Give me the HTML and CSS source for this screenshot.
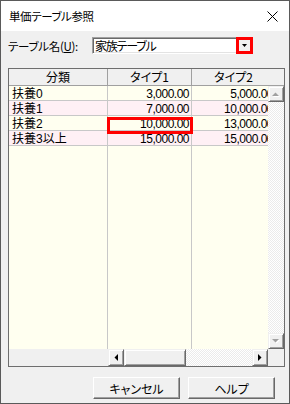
FILE: index.html
```html
<!DOCTYPE html>
<html lang="ja">
<head>
  <meta charset="UTF-8" />
  <title>単価テーブル参照</title>
  <link rel="stylesheet" href="styles.css">
</head>
<body>
  <div class="window">
    <div class="titlebar">
      <span class="title">単価テーブル参照</span>
      <svg class="close" width="11" height="11" viewBox="0 0 11 11">
        <path d="M0.5 0.5 L10.5 10.5 M10.5 0.5 L0.5 10.5" stroke="#000" stroke-width="1" fill="none" />
      </svg>
    </div>

    <div class="content">
      <div class="field-row">
        <label class="field-label">テーブル名(<u>U</u>):</label>
        <div class="combo">
          <span class="combo-text">家族テーブル</span>
          <span class="combo-btn">
            <svg width="5" height="3" viewBox="0 0 5 3"><polygon points="0,0 5,0 2.5,3" fill="#000" /></svg>
          </span>
          <span class="mark mark-btn"></span>
        </div>
      </div>

      <div class="grid">
        <div class="viewport">
          <table class="sheet">
            <colgroup>
              <col class="w1"><col class="w2"><col class="w2">
            </colgroup>
            <thead>
              <tr><th>分類</th><th>タイプ1</th><th>タイプ2</th></tr>
            </thead>
            <tbody>
              <tr class="odd"><td class="name">扶養0</td><td class="num">3,000.00</td><td class="num">5,000.00</td></tr>
              <tr class="even"><td class="name">扶養1</td><td class="num">7,000.00</td><td class="num">10,000.00</td></tr>
              <tr class="odd"><td class="name">扶養2</td><td class="num">10,000.00</td><td class="num">13,000.00</td></tr>
              <tr class="even"><td class="name">扶養3以上</td><td class="num">15,000.00</td><td class="num">15,000.00</td></tr>
              <tr class="filler"><td></td><td></td><td></td></tr>
            </tbody>
          </table>
        </div>

        <div class="head-corner"></div>

        <div class="vscroll">
          <div class="sbtn">
            <svg width="8" height="5" viewBox="0 0 8 5"><polygon points="1,5 8,5 4.5,1.5" fill="#fff" /><polygon points="0,4 7,4 3.5,0.5" fill="#a0a0a0" /></svg>
          </div>
          <div class="track"></div>
          <div class="sbtn">
            <svg width="8" height="5" viewBox="0 0 8 5"><polygon points="1,1 8,1 4.5,4.5" fill="#fff" /><polygon points="0,0 7,0 3.5,3.5" fill="#a0a0a0" /></svg>
          </div>
        </div>

        <div class="frozen"></div>

        <div class="hscroll">
          <div class="sbtn">
            <svg width="4" height="7" viewBox="0 0 4 7"><polygon points="4,0 4,7 0.5,3.5" fill="#000" /></svg>
          </div>
          <div class="thumb"></div>
          <div class="track"></div>
          <div class="sbtn">
            <svg width="4" height="7" viewBox="0 0 4 7"><polygon points="0,0 0,7 3.5,3.5" fill="#000" /></svg>
          </div>
        </div>

        <div class="foot-corner"></div>

        <span class="mark mark-cell"></span>
      </div>

      <div class="buttons">
        <button class="btn">キャンセル</button>
        <button class="btn">ヘルプ</button>
      </div>
    </div>
  </div>
</body>
</html>
```

FILE: styles.css
```css
body {
  margin: 0;
  background: #fff;
  font-family: "Noto Sans CJK JP", sans-serif;
  font-size: 12px;
  color: #000;
}

.window {
  width: 290px;
  height: 404px;
  box-sizing: border-box;
  border: 1px solid #5a5a5a;
  background: #f0f0f0;
  display: flex;
  flex-direction: column;
}

.titlebar {
  height: 30px;
  flex: none;
  background: #fff;
  display: flex;
  align-items: center;
  justify-content: space-between;
  padding: 0 11px 0 8px;
}

.title {
  font-size: 11.5px;
  font-feature-settings: "palt";
  letter-spacing: -0.4px;
  line-height: 14px;
}

.content {
  padding: 6px 4px 0 7px;
}

.field-row {
  display: flex;
  align-items: center;
  height: 17px;
}

.field-label {
  width: 84px;
  font-size: 11.5px;
  font-feature-settings: "palt";
  letter-spacing: -0.3px;
  line-height: 14px;
}

.combo {
  position: relative;
  width: 161px;
  height: 17px;
  box-sizing: border-box;
  background: #fff;
  border: 1px solid;
  border-color: #a0a0a0 #fff #fff #a0a0a0;
  box-shadow: inset 1px 1px #696969, inset -1px -1px #e3e3e3;
  display: flex;
  align-items: center;
  padding: 0 1px 0 2px;
}

.combo-text {
  font-feature-settings: "palt";
  letter-spacing: -1.2px;
  line-height: 14px;
}

.combo-btn {
  margin-left: auto;
  width: 14px;
  height: 13px;
  background: #f0f0f0;
  display: flex;
  align-items: center;
  justify-content: center;
}

.mark {
  position: absolute;
  box-sizing: border-box;
  border: 3px solid #f00;
}

.mark-btn {
  top: -1px;
  right: -1px;
  width: 17px;
  height: 17px;
}

.grid {
  position: relative;
  margin-top: 14px;
  width: 277px;
  height: 299px;
  box-sizing: border-box;
  border: 1px solid #6e6e6e;
  background: #f0f0f0;
  display: grid;
  grid-template-columns: 99px 84px 76px 16px;
  grid-template-rows: 17px 1fr 17px;
}

.viewport {
  grid-column: 1 / 4;
  grid-row: 1 / 3;
  overflow: hidden;
}

.sheet {
  table-layout: fixed;
  width: 267px;
  height: 100%;
  border-collapse: separate;
  border-spacing: 0;
  font-family: "Liberation Sans", "Noto Sans CJK JP", sans-serif;
}

.w1 { width: 99px; }
.w2 { width: 84px; }

.sheet th {
  height: 16px;
  padding: 0;
  font-family: "Noto Sans CJK JP", sans-serif;
  font-weight: normal;
  line-height: 16px;
  background: #f0f0f0;
  border-right: 1px solid #a0a0a0;
  border-bottom: 1px solid #a0a0a0;
  text-align: center;
  font-feature-settings: "palt";
}

.sheet td {
  height: 11px;
  padding: 3px 0 0;
  line-height: 11px;
  border-right: 1px solid #c8c8c8;
  border-bottom: 1px solid #c8c8c8;
  white-space: nowrap;
}

.sheet .name {
  padding-left: 3px;
}

.sheet .num {
  text-align: right;
  padding-right: 2px;
  letter-spacing: -0.5px;
}

.odd td { background: #fffff0; }
.even td { background: #fff0f5; }

.sheet .filler td {
  height: auto;
  background: #fffff0;
  border-bottom: none;
}

.head-corner {
  grid-column: 4;
  grid-row: 1;
  background: #f0f0f0;
  border-bottom: 1px solid #a0a0a0;
}

.vscroll {
  grid-column: 4;
  grid-row: 2;
  display: flex;
  flex-direction: column;
}

.sbtn,
.thumb {
  box-sizing: border-box;
  background: #f0f0f0;
  border: 1px solid;
  border-color: #f0f0f0 #696969 #696969 #f0f0f0;
  box-shadow: inset 1px 1px #fff, inset -1px -1px #a0a0a0;
  display: flex;
  align-items: center;
  justify-content: center;
}

.vscroll .sbtn {
  height: 16px;
}

.track {
  flex: 1;
  background-color: #fff;
  background-image: conic-gradient(#fff 25%, #ebebeb 0 50%, #fff 0 75%, #ebebeb 0);
  background-size: 2px 2px;
}

.frozen {
  grid-column: 1;
  grid-row: 3;
}

.hscroll {
  grid-column: 2 / 4;
  grid-row: 3;
  display: flex;
}

.hscroll .sbtn {
  width: 16px;
}

.thumb {
  width: 62px;
}

.foot-corner {
  grid-column: 4;
  grid-row: 3;
  background: #f0f0f0;
}

.mark-cell {
  left: 98px;
  top: 48px;
  width: 86px;
  height: 17px;
}

.buttons {
  display: flex;
  justify-content: flex-end;
  gap: 8px;
  margin-top: 10px;
  padding-right: 10px;
}

.btn {
  width: 87px;
  height: 22px;
  padding: 0;
  font-family: "Noto Sans CJK JP", sans-serif;
  font-size: 12px;
  font-feature-settings: "palt";
  color: #000;
  background: #f0f0f0;
  border: 1px solid;
  border-color: #fff #696969 #696969 #fff;
  box-shadow: inset -1px -1px #a0a0a0;
}
```
